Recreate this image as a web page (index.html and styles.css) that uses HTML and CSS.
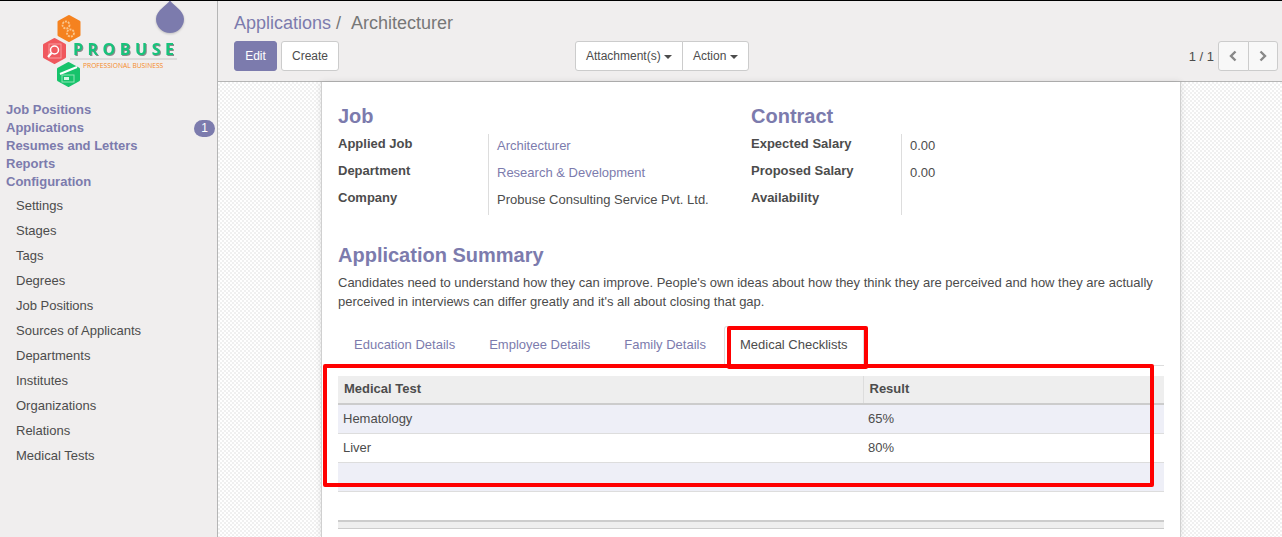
FILE: index.html
```html
<!DOCTYPE html>
<html lang="en">
<head>
  <meta charset="UTF-8">
  <title>Architecturer</title>
  <meta name="viewport" content="width=device-width, initial-scale=1.0" />
  <link rel="stylesheet" href="styles.css">
</head>
<body>
  <div class="app">
    <div class="sidebar">
      <div class="logo">
        <svg width="217" height="92" viewBox="0 0 217 92">
          <g stroke-linejoin="round" stroke-width="3">
            <polygon points="69,15.500 79,21 79,34 69,39.500 59,34 59,21" fill="#f5821f" stroke="#f5821f"/>
            <polygon points="54.500,38.500 64.500,44 64.500,56 54.500,61.500 44.500,56 44.500,44" fill="#f0585e" stroke="#f0585e"/>
            <polygon points="68.500,62.500 78.500,68 78.500,79 68.500,84.500 58.500,79 58.500,68" fill="#17c36b" stroke="#17c36b"/>
          </g>
          <circle cx="66" cy="24" r="3.500" fill="none" stroke="#fbc68c" stroke-width="1.800" stroke-dasharray="2 1"/>
          <circle cx="70.500" cy="32" r="3.500" fill="none" stroke="#fbc68c" stroke-width="1.800" stroke-dasharray="2 1"/>
          <rect x="49" y="43" width="12" height="14" fill="none" stroke="#f79a9d"/>
          <circle cx="54.500" cy="49" r="4" fill="#f0585e" stroke="#fff" stroke-width="1.500"/>
          <line x1="51.500" y1="52" x2="48" y2="56" stroke="#fff" stroke-width="2"/>
          <line x1="60" y1="73" x2="77" y2="66" stroke="#fff" stroke-width="2"/>
          <rect x="62" y="74" width="12" height="7" fill="none" stroke="#8fe4b6"/>
          <rect x="64" y="76" width="5" height="3" fill="#d8f7e6"/>
          <text class="logo-name" x="73" y="54">PROBUSE</text>
          <line x1="70" y1="58" x2="177" y2="58" stroke="#c9c6c6"/>
          <text class="logo-tag" x="83" y="67">PROFESSIONAL BUSINESS</text>
        </svg>
      </div>
      <ul class="menu">
        <li class="menu-head">Job Positions</li>
        <li class="menu-head">Applications <span class="badge">1</span></li>
        <li class="menu-head">Resumes and Letters</li>
        <li class="menu-head">Reports</li>
        <li class="menu-head">Configuration</li>
      </ul>
      <ul class="submenu">
        <li>Settings</li>
        <li>Stages</li>
        <li>Tags</li>
        <li>Degrees</li>
        <li>Job Positions</li>
        <li>Sources of Applicants</li>
        <li>Departments</li>
        <li>Institutes</li>
        <li>Organizations</li>
        <li>Relations</li>
        <li>Medical Tests</li>
      </ul>
    </div>

    <div class="main">
      <div class="control-panel">
        <div class="breadcrumb"><span class="crumb-link">Applications</span><span class="crumb-sep">/</span><span class="crumb-now">Architecturer</span></div>
        <div class="cp-row">
          <div class="cp-buttons">
            <button class="btn btn-primary" type="button">Edit</button>
            <button class="btn" type="button">Create</button>
          </div>
          <div class="btn-group">
            <button class="btn" type="button">Attachment(s) <span class="caret"></span></button>
            <button class="btn" type="button">Action <span class="caret"></span></button>
          </div>
          <div class="pager">
            <span class="pager-value">1 / 1</span>
            <div class="btn-group">
              <button class="btn btn-pager" type="button" aria-label="Previous">
                <svg width="10" height="12" viewBox="0 0 10 12"><path d="M7.500 1.500 3 6l4.500 4.500" fill="none" stroke="#888" stroke-width="2.400"/></svg>
              </button>
              <button class="btn btn-pager" type="button" aria-label="Next">
                <svg width="10" height="12" viewBox="0 0 10 12"><path d="M2.500 1.500 7 6l-4.500 4.500" fill="none" stroke="#888" stroke-width="2.400"/></svg>
              </button>
            </div>
          </div>
        </div>
      </div>

      <div class="content">
        <div class="sheet">
          <div class="groups">
            <div class="group group-job">
              <h2>Job</h2>
              <div class="fields">
                <div class="field-label">Applied Job</div>
                <div class="field-value"><a>Architecturer</a></div>
                <div class="field-label">Department</div>
                <div class="field-value"><a>Research &amp; Development</a></div>
                <div class="field-label">Company</div>
                <div class="field-value">Probuse Consulting Service Pvt. Ltd.</div>
              </div>
            </div>
            <div class="group">
              <h2>Contract</h2>
              <div class="fields">
                <div class="field-label">Expected Salary</div>
                <div class="field-value">0.00</div>
                <div class="field-label">Proposed Salary</div>
                <div class="field-value">0.00</div>
                <div class="field-label">Availability</div>
                <div class="field-value"></div>
              </div>
            </div>
          </div>

          <h2 class="summary-title">Application Summary</h2>
          <p class="summary">Candidates need to understand how they can improve. People's own ideas about how they think they are perceived and how they are actually perceived in interviews can differ greatly and it's all about closing that gap.</p>

          <ul class="tabs">
            <li>Education Details</li>
            <li>Employee Details</li>
            <li>Family Details</li>
            <li class="active">Medical Checklists</li>
          </ul>

          <table class="list">
            <thead>
              <tr><th class="col-test">Medical Test</th><th>Result</th></tr>
            </thead>
            <tbody>
              <tr><td>Hematology</td><td>65%</td></tr>
              <tr><td>Liver</td><td>80%</td></tr>
              <tr><td>&nbsp;</td><td></td></tr>
            </tbody>
          </table>
          <div class="list-foot"></div>

          <div class="mark mark-tab"></div>
          <div class="mark mark-table"></div>
        </div>
      </div>
    </div>

    <svg class="drop" width="32" height="38" viewBox="0 0 32 38">
      <path d="M16 0C18 5 30 10 30 19A14 14 0 0 1 2 19C2 10 14 5 16 0Z" fill="#7c7bad"/>
    </svg>
  </div>
</body>
</html>
```
FILE: styles.css
```css
* {
    box-sizing: border-box;
}

html, body {
    margin: 0;
    height: 537px;
    overflow: hidden;
}

body {
    font-family: "Liberation Sans", Arial, sans-serif;
    font-size: 13px;
    color: #4c4c4c;
    border-top: 1px solid #000;
}

.app {
    display: flex;
    height: 536px;
    position: relative;
}

.sidebar {
    width: 218px;
    flex: none;
    background: #f0eeee;
    border-right: 1px solid #b5b5b5;
}

.logo {
    height: 100px;
}

.logo svg {
    display: block;
}

.logo-name {
    font-family: "Open Sans", sans-serif;
    font-size: 16px;
    font-weight: 700;
    letter-spacing: 4.500px;
    fill: #17c37b;
    filter: drop-shadow(1px 1px 0 #8a8a8a);
}

.logo-tag {
    font-family: "Open Sans", sans-serif;
    font-size: 6.700px;
    fill: #f58a1f;
}

.drop {
    position: absolute;
    left: 154px;
    top: -1px;
    filter: drop-shadow(0 1px 1px rgba(0, 0, 0, 0.2));
}

.menu, .submenu, .tabs {
    list-style: none;
    margin: 0;
    padding: 0;
}

.menu-head {
    position: relative;
    height: 18px;
    line-height: 18px;
    padding-left: 6px;
    font-weight: 700;
    color: #7c7bad;
}

.badge {
    position: absolute;
    left: 194px;
    top: 1px;
    width: 21px;
    height: 17px;
    line-height: 17px;
    border-radius: 9px;
    background: #7c7bad;
    color: #fff;
    font-weight: 400;
    font-size: 12px;
    text-align: center;
}

.submenu {
    margin-top: 2px;
}

.submenu li {
    height: 25px;
    line-height: 25px;
    padding-left: 16px;
    color: #4c4c4c;
}

.main {
    flex: 1;
    display: flex;
    flex-direction: column;
    min-width: 0;
}

.control-panel {
    height: 81px;
    flex: none;
    background: #f0eeee;
    border-bottom: 1px solid #b5b5b5;
    padding: 10px 4px 0 16px;
}

.breadcrumb {
    height: 24px;
    line-height: 24px;
    font-size: 18px;
    margin-bottom: 6px;
}

.crumb-link {
    color: #7c7bad;
}

.crumb-sep {
    margin: 0 10px 0 5px;
    color: #777;
}

.crumb-now {
    color: #777;
}

.cp-row {
    display: grid;
    grid-template-columns: 341px auto 1fr;
}

.cp-buttons {
    display: flex;
    gap: 4px;
}

.btn {
    height: 30px;
    padding: 0 10px;
    font-family: inherit;
    font-size: 12px;
    color: #4c4c4c;
    background: #fff;
    border: 1px solid #ccc;
    border-radius: 3px;
}

.btn-primary {
    width: 43px;
    background: #7c7bad;
    border-color: #7c7bad;
    color: #fff;
}

.btn-group {
    display: flex;
}

.btn-group .btn {
    border-radius: 0;
}

.btn-group .btn:first-child {
    border-radius: 3px 0 0 3px;
}

.btn-group .btn:last-child {
    border-radius: 0 3px 3px 0;
    margin-left: -1px;
}

.caret {
    display: inline-block;
    vertical-align: middle;
    border-top: 4px solid #4c4c4c;
    border-left: 4px solid transparent;
    border-right: 4px solid transparent;
}

.pager {
    display: flex;
    justify-content: flex-end;
    align-items: center;
    gap: 4px;
}

.pager-value {
    font-size: 13px;
}

.btn-group .btn-pager {
    width: 30.500px;
    padding: 0;
    background: #f8f8f8;
}

.btn-pager svg {
    display: block;
    margin: 0 auto;
}

.content {
    flex: 1;
    min-height: 0;
    padding: 0 102px 0 103px;
    background-color: #fdfdfd;
    background-image: conic-gradient(#f0f0f0 25%, #fff 0 50%, #f0f0f0 0 75%, #fff 0);
    background-size: 4px 4px;
}

.sheet {
    position: relative;
    height: 100%;
    width: 860px;
    padding: 0 16px;
    background: #fff;
    border-left: 1px solid #d0d0d0;
    border-right: 1px solid #d0d0d0;
    box-shadow: 0 0 6px rgba(0, 0, 0, 0.12);
}

.groups {
    display: flex;
    padding-top: 21px;
}

.group {
    flex: 1;
}

.group-job {
    flex: none;
    width: 413px;
}

h2 {
    margin: 0;
    font-size: 20px;
    line-height: 27px;
    font-weight: 700;
    color: #7c7bad;
}

.fields {
    display: grid;
    grid-template-columns: 150px 1fr;
    grid-auto-rows: 27px;
    margin-top: 4px;
}

.field-label {
    font-weight: 700;
    line-height: 20px;
}

.field-value {
    border-left: 1px solid #ddd;
    padding: 2px 0 0 8px;
    line-height: 19px;
}

.field-value a {
    color: #7c7bad;
}

.summary-title {
    margin-top: 27px;
}

.summary {
    margin: 4px 0 0;
    line-height: 19px;
}

.tabs {
    display: flex;
    height: 40px;
    margin-top: 15px;
    padding-left: 16px;
    gap: 34px;
    border-bottom: 1px solid #ddd;
    color: #7c7bad;
}

.tabs li {
    padding-top: 9px;
    line-height: 20px;
}

.tabs .active {
    height: 40px;
    margin-left: -16px;
    padding: 8px 15px 0;
    color: #4c4c4c;
    background: #fff;
    border: 1px solid #ddd;
    border-bottom-color: #fff;
    border-radius: 3px 3px 0 0;
}

.list {
    width: 100%;
    margin-top: 10px;
    border-collapse: collapse;
    table-layout: fixed;
}

.list th {
    height: 28px;
    padding: 0 6px 2px;
    text-align: left;
    background: #eee;
    border-bottom: 2px solid #ccc;
}

.list .col-test {
    width: 525px;
    border-right: 1px solid #ddd;
}

.list td {
    height: 29px;
    padding: 0 5px;
    border-bottom: 1px solid #ddd;
}

.list tbody tr:nth-child(odd) td {
    background: #eeeff7;
}

.list-foot {
    height: 9px;
    margin-top: 28px;
    background: #eee;
    border-top: 2px solid #ccc;
    border-bottom: 1px solid #ccc;
}

/* red annotation boxes drawn over the screenshot */
.mark {
    position: absolute;
    border: 4px solid #f00;
    border-radius: 2px;
}

.mark-tab {
    left: 405px;
    top: 244px;
    width: 141px;
    height: 43px;
}

.mark-table {
    left: 1px;
    top: 282px;
    width: 831px;
    height: 123px;
}
```
